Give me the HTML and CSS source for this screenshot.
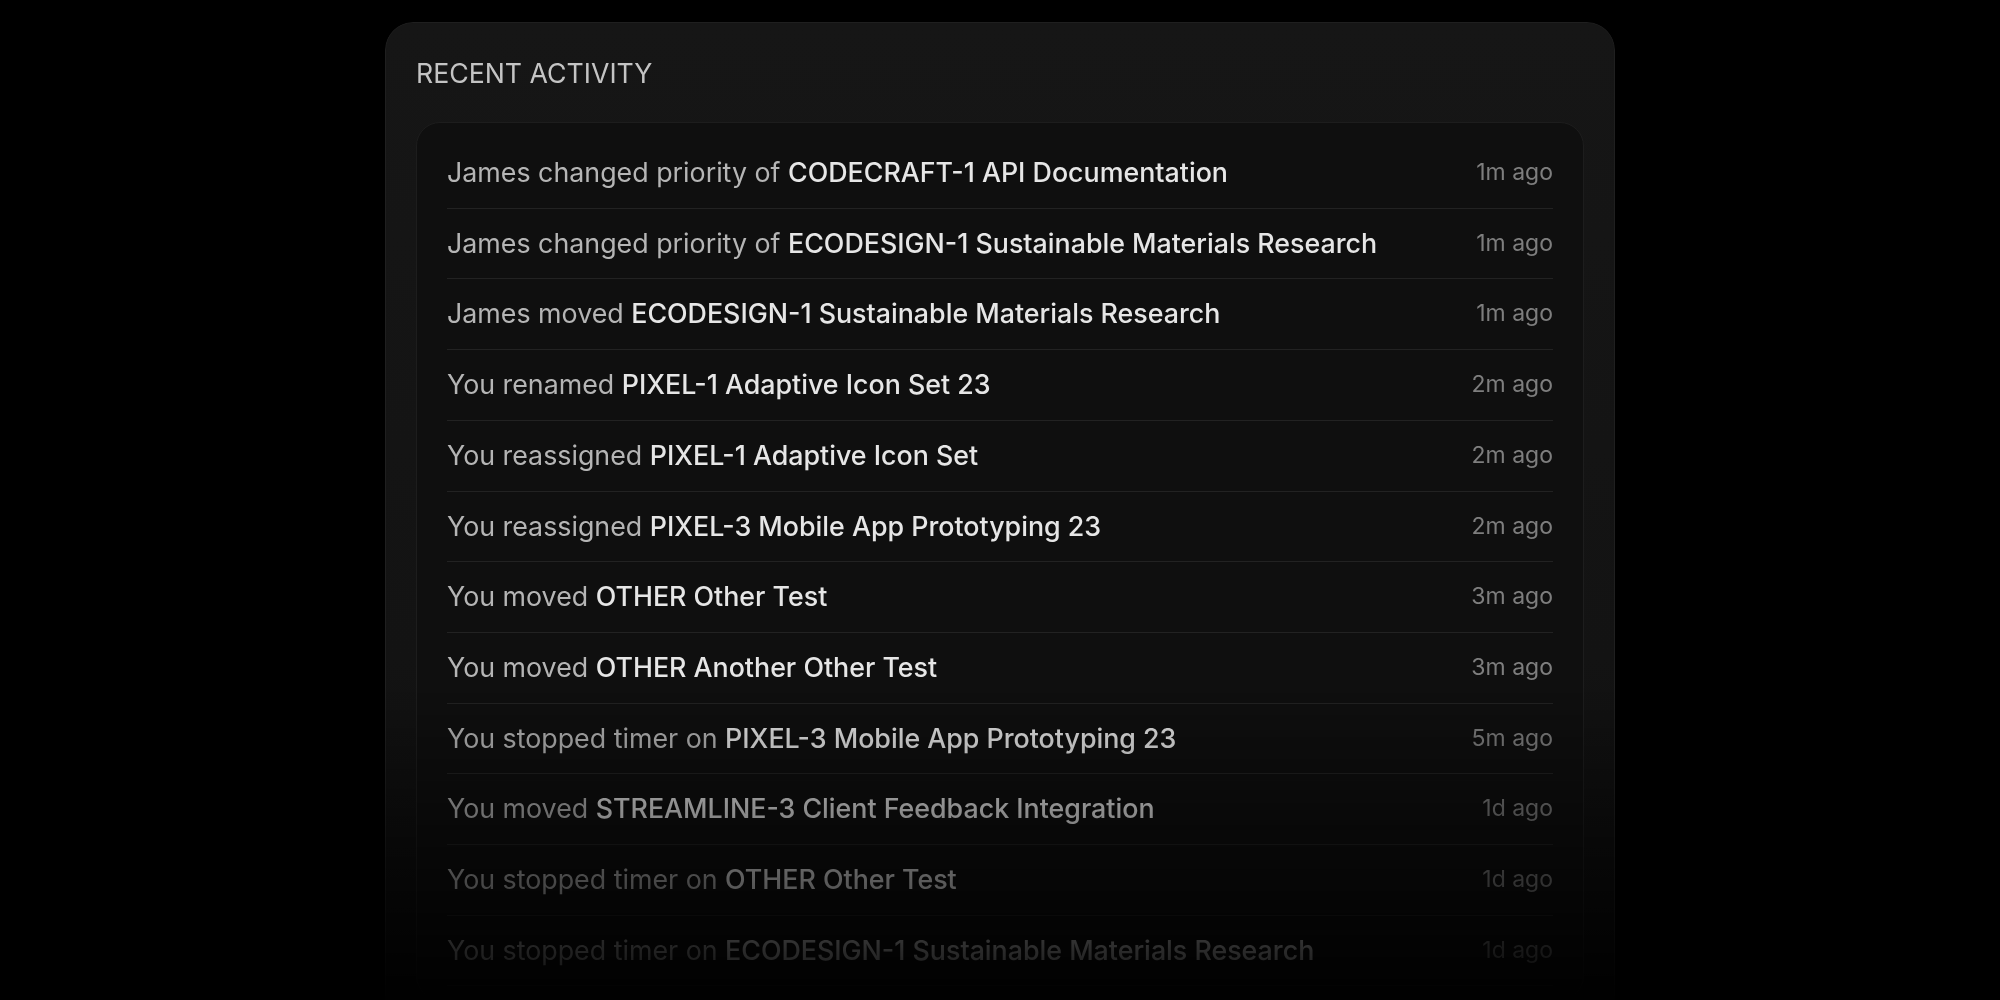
FILE: index.html
```html
<html lang="en">
    <head>
        <meta charset="UTF-8">
        <title>Recent activity</title>
        <link rel="stylesheet" href="styles.css">
    </head>
    <body>
        <div class="panel">
            <div class="panel-title">RECENT ACTIVITY</div>
            <div class="feed">
                <div class="feed-row">
                    <div class="feed-text">James changed priority of <span class="item">CODECRAFT-1 API Documentation</span></div>
                    <div class="feed-time">1m ago</div>
                </div>
                <div class="feed-row">
                    <div class="feed-text">James changed priority of <span class="item">ECODESIGN-1 Sustainable Materials Research</span></div>
                    <div class="feed-time">1m ago</div>
                </div>
                <div class="feed-row">
                    <div class="feed-text">James moved <span class="item">ECODESIGN-1 Sustainable Materials Research</span></div>
                    <div class="feed-time">1m ago</div>
                </div>
                <div class="feed-row">
                    <div class="feed-text">You renamed <span class="item">PIXEL-1 Adaptive Icon Set 23</span></div>
                    <div class="feed-time">2m ago</div>
                </div>
                <div class="feed-row">
                    <div class="feed-text">You reassigned <span class="item">PIXEL-1 Adaptive Icon Set</span></div>
                    <div class="feed-time">2m ago</div>
                </div>
                <div class="feed-row">
                    <div class="feed-text">You reassigned <span class="item">PIXEL-3 Mobile App Prototyping 23</span></div>
                    <div class="feed-time">2m ago</div>
                </div>
                <div class="feed-row">
                    <div class="feed-text">You moved <span class="item">OTHER Other Test</span></div>
                    <div class="feed-time">3m ago</div>
                </div>
                <div class="feed-row">
                    <div class="feed-text">You moved <span class="item">OTHER Another Other Test</span></div>
                    <div class="feed-time">3m ago</div>
                </div>
                <div class="feed-row">
                    <div class="feed-text">You stopped timer on <span class="item">PIXEL-3 Mobile App Prototyping 23</span></div>
                    <div class="feed-time">5m ago</div>
                </div>
                <div class="feed-row">
                    <div class="feed-text">You moved <span class="item">STREAMLINE-3 Client Feedback Integration</span></div>
                    <div class="feed-time">1d ago</div>
                </div>
                <div class="feed-row">
                    <div class="feed-text">You stopped timer on <span class="item">OTHER Other Test</span></div>
                    <div class="feed-time">1d ago</div>
                </div>
                <div class="feed-row">
                    <div class="feed-text">You stopped timer on <span class="item">ECODESIGN-1 Sustainable Materials Research</span></div>
                    <div class="feed-time">1d ago</div>
                </div>
            </div>
        </div>
    </body>
</html>
```

FILE: styles.css
```css
html, body{margin: 0; padding: 0; width: 100%; height: 100%; background: #000; overflow: hidden;}
body{
    font-family: Inter, "Noto Sans", sans-serif;
    display: flex;
    justify-content: center;
    align-items: flex-start;
}
.panel{
    width: 1230px;
    height: 1060px;
    margin-top: 22px;
    box-sizing: border-box;
    padding: 33px 30px 0 30px;
    background: linear-gradient(180deg, #161616 0%, #131313 60%, #0c0c0c 100%);
    border: 1px solid #1f1f1f;
    border-radius: 28px;
    -webkit-mask-image: linear-gradient(180deg, #000 660px, transparent 990px);
    mask-image: linear-gradient(180deg, #000 660px, transparent 990px);
}
.panel-title{
    color: #c4c4c4;
    font-size: 26.7px;
    line-height: 34px;
    font-weight: 400;
}
.feed{
    margin-top: 32px;
    padding: 15px 30px 13px 30px;
    background: #0f0f0f;
    border: 1px solid #1d1d1d;
    border-radius: 24px;
}
.feed-row{
    display: flex;
    align-items: center;
    justify-content: space-between;
    padding: 22px 0;
    line-height: 25.7px;
    border-bottom: 1px solid #222;
}
.feed-text{
    color: #b5b5b5;
    font-size: 26.8px;
    white-space: nowrap;
}
.feed-text .item{
    color: #e6e6e6;
    font-weight: 500;
}
.feed-time{
    color: #7e7e7e;
    font-size: 23px;
}
```
